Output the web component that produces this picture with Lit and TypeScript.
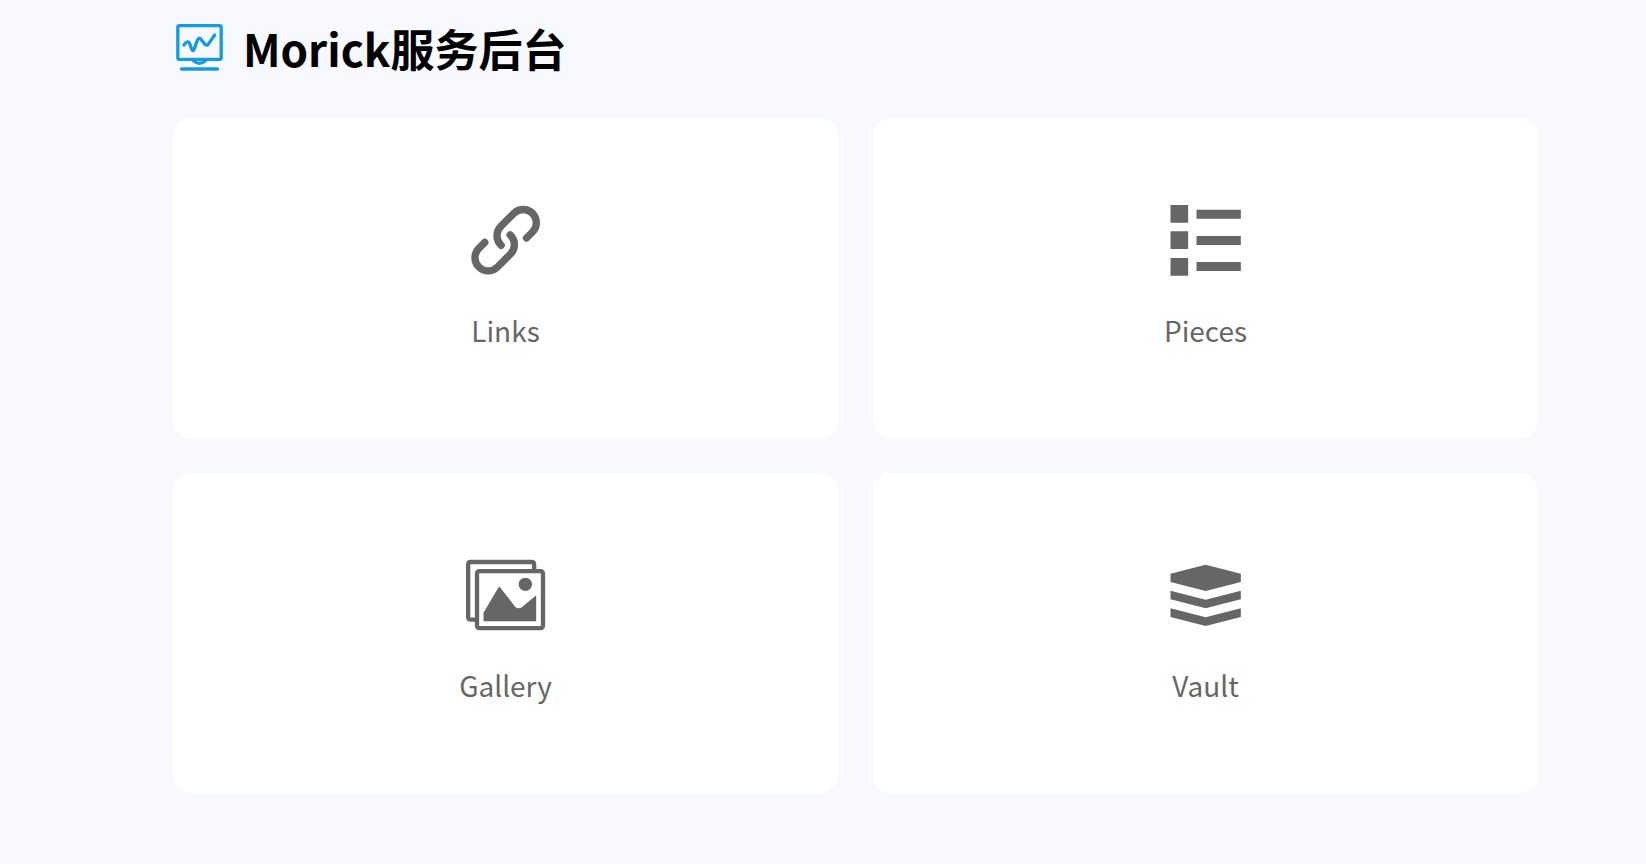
import { LitElement, html, css, svg } from "lit";
import { customElement } from "lit/decorators.js";

const logo = html`<svg class="logo" viewBox="39 33 162 162" aria-hidden="true">
  <g fill="none" stroke="#169bdf" stroke-linecap="round" stroke-linejoin="round">
    <rect x="53.500" y="47" width="130" height="101" rx="5" stroke-width="10" />
    <path stroke-width="10" d="M72 105 Q84 87 90 103 Q98 132 103 116 L112 91 Q118 77 126 92 L135 103 Q140 109 146 101 L164 75" />
    <path stroke-width="9" d="M99 152 Q118 168 138 152" />
    <path stroke-width="11" d="M65 177 H172" />
  </g>
</svg>`;

const entries = [
  {
    name: "Links",
    glyph: svg`<g fill="none" stroke="currentColor" stroke-width="22" stroke-linecap="round">
      <path d="M138 166 A39.500 39.500 0 0 1 137 109 L176 70 A39.500 39.500 0 0 1 232 126 L214 144" />
      <path d="M165 135 A39.500 39.500 0 0 1 166 192 L127 231 A39.500 39.500 0 0 1 71 175 L89 157" />
    </g>`,
  },
  {
    name: "Pieces",
    glyph: svg`<path d="M46 45h53v53h-53z M46 124h53v53h-53z M46 204h53v53h-53z M124 59h133v27h-133z M124 138h133v27h-133z M124 216h133v27h-133z" />`,
  },
  {
    name: "Gallery",
    glyph: svg`<g fill="none" stroke="currentColor" stroke-width="13">
        <path d="M60 224 H47 Q39 224 39 216 V59 Q39 51 47 51 H229 Q237 51 237 59 V73" />
        <rect x="65.500" y="78.500" width="198" height="171" rx="7" />
      </g>
      <circle cx="210.500" cy="118" r="20" />
      <path d="M85 229 V203 L132 124 L180 185 Q184 190 190 190 Q196 190 201 186 L243 151 V229 Z" />`,
  },
  {
    name: "Vault",
    glyph: svg`<path d="M151.500 59 L257 86 V111 L151.500 138 L46 111 V86 Z M46 137 L151.500 164 L257 137 V163 L151.500 190 L46 163 Z M46 190 L151.500 217 L257 190 V216 L151.500 243 L46 216 Z" />`,
  },
];

@customElement("app-root")
export class AppRoot extends LitElement {
  static styles = css`
    :host {
      display: block;
      box-sizing: border-box;
      min-height: 100vh;
      padding: 16px 108px 70px 173px;
      background: #f8f9ff;
      font-family: "Noto Sans CJK SC", sans-serif;
    }
    .header {
      display: flex;
      align-items: center;
      gap: 16px;
      height: 64px;
      margin-bottom: 38px;
    }
    .logo {
      width: 54px;
      height: 54px;
    }
    .title {
      margin: 0;
      font-size: 44px;
      line-height: 64px;
      font-weight: 700;
      color: #000;
    }
    .grid {
      display: grid;
      grid-template-columns: repeat(2, 1fr);
      gap: 35px;
    }
    .card {
      display: flex;
      flex-direction: column;
      align-items: center;
      justify-content: center;
      gap: 28px;
      box-sizing: border-box;
      min-height: 320px;
      padding-bottom: 4px;
      border-radius: 18px;
      background: #fff;
      color: #666;
      text-decoration: none;
    }
    .icon {
      width: 80px;
      height: 80px;
      fill: currentColor;
    }
    .label {
      font-size: 28px;
      line-height: 44px;
    }
  `;

  render() {
    return html`
      <header class="header">
        ${logo}
        <h1 class="title">Morick服务后台</h1>
      </header>
      <main class="grid">
        ${entries.map(
          (entry) => html`<a class="card" href="#${entry.name.toLowerCase()}">
            <svg class="icon" viewBox="32.5 30 240 240" aria-hidden="true">${entry.glyph}</svg>
            <span class="label">${entry.name}</span>
          </a>`
        )}
      </main>
    `;
  }
}
